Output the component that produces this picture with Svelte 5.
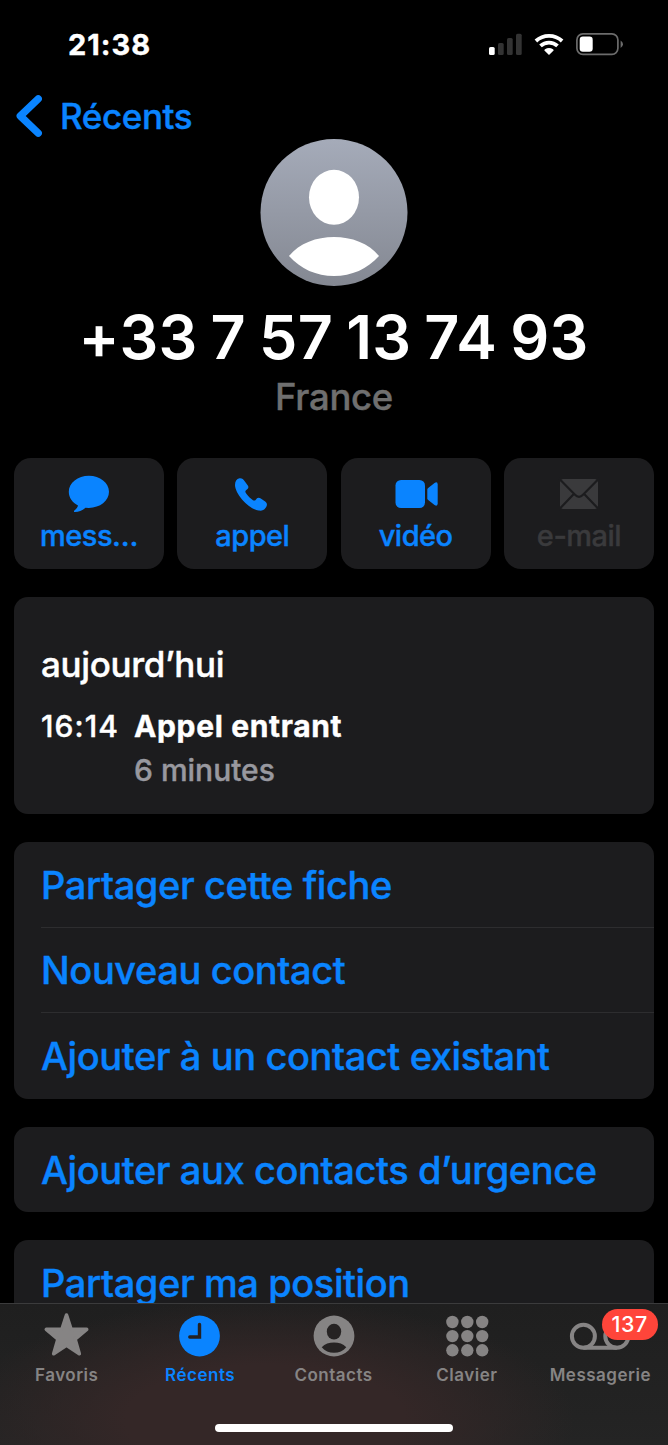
<script>
    const actions = [
        {icon: "message", label: "mess…"},
        {icon: "phone", label: "appel"},
        {icon: "video", label: "vidéo"},
        {icon: "mail", label: "e-mail", disabled: true},
    ];

    const groups = [
        ["Partager cette fiche", "Nouveau contact", "Ajouter à un contact existant"],
        ["Ajouter aux contacts d’urgence"],
        ["Partager ma position"],
    ];

    const tabs = [
        {icon: "star", label: "Favoris"},
        {icon: "clock", label: "Récents"},
        {icon: "person", label: "Contacts"},
        {icon: "keypad", label: "Clavier"},
        {icon: "voicemail", label: "Messagerie", badge: 137},
    ];

    let current = $state("Récents");
</script>

<div class="screen">
    <header class="status">
        <span class="clock">21:38</span>
        <svg width="136" height="26" viewBox="488 31 136 26">
            <rect x="489" y="47" width="5.7" height="8" rx="1.6" fill="#fff" />
            <g fill="#333">
                <rect x="498" y="43" width="5.7" height="12" rx="1.6" />
                <rect x="507" y="38" width="5.7" height="17" rx="1.6" />
                <rect x="516" y="33.7" width="5.7" height="21.3" rx="1.6" />
            </g>
            <g fill="none" stroke="#fff">
                <path d="M535.9 41A19.2 19.2 0 0 1 562.1 41" stroke-width="3.8" />
                <path d="M540.5 45.9A12.5 12.5 0 0 1 557.5 45.9" stroke-width="3.8" />
            </g>
            <path d="M549 55L544.4 50.6Q544 49.8 545 49.2A7.3 7.3 0 0 1 553 49.2Q554 49.8 553.6 50.6Z" fill="#fff" />
            <rect x="576.9" y="33.9" width="41" height="20.4" rx="6" fill="none" stroke="#6c6c6c" stroke-width="1.7" />
            <rect x="579.7" y="36.6" width="13" height="15.2" rx="3.2" fill="#fff" />
            <path d="M620.6 40.5Q623 42 623 44.2T620.6 48Z" fill="#6c6c6c" />
        </svg>
    </header>

    <nav class="back">
        <svg width="30" height="46" viewBox="0 0 30 46">
            <path d="M24.2 5.8L6.3 23L24.2 40.2" fill="none" stroke="#0a84ff" stroke-width="7.4" stroke-linecap="round" stroke-linejoin="round" />
        </svg>
        <span>Récents</span>
    </nav>

    <main>
        <section class="contact">
            <svg width="148" height="147" viewBox="0 0 148 147">
                <defs>
                    <linearGradient id="avatar" x1="0" y1="0" x2="0" y2="1">
                        <stop offset="0" stop-color="#a5abb9" />
                        <stop offset="1" stop-color="#848892" />
                    </linearGradient>
                </defs>
                <circle cx="74" cy="73.5" r="73.5" fill="url(#avatar)" />
                <ellipse cx="74" cy="58.3" rx="25" ry="27.5" fill="#fff" />
                <path d="M29 117C39.5 104 56.5 98 74 98S108.5 104 119 117C107.5 130 91.5 137 74 137S40.5 130 29 117Z" fill="#fff" />
            </svg>
            <h1>+33 7 57 13 74 93</h1>
            <p>France</p>
        </section>

        <section class="actions">
            {#each actions as action}
                <button class="action" disabled={action.disabled}>
                    <svg width="48" height="40" viewBox="0 0 48 40" fill="currentColor">
                        {#if action.icon === "message"}
                            <path d="M23.9 1.7C35 1.7 44 8.7 44 17.8S35 33.9 23.9 33.9L20.5 33.8C17.5 36.3 13.5 38 10 38C8.7 38 8.7 37.2 9.6 36.3C11.2 34.8 12.6 33.5 13 31.4C7.4 28.6 3.8 23.8 3.8 17.8C3.8 8.7 12.8 1.7 23.9 1.7Z" />
                        {:else if action.icon === "phone"}
                            <path d="M11.5 4.3C14 4 15.5 5.5 16.5 7L19.8 11.5C20.8 13 20.4 14 19.5 15L18 16.2C17 17.2 17.2 18 18 19.2C20 22 22.5 24.5 25 26.2C26.2 27 27 26.6 28 25.4L29 24.3C30 23.3 31.5 23.5 32.8 24.5L37.2 27.6C39.2 29 39.4 31 38.2 33C36.5 36 34 37.2 30.5 36.6C25 35.5 18.5 31 14 25.5C10 20.5 7 15 7 11C7 7.5 8.5 4.8 11.5 4.3Z" />
                        {:else if action.icon === "video"}
                            <rect x="3.5" y="6" width="29.5" height="28" rx="5.5" />
                            <path d="M35.3 15.8Q35.3 14.8 36.2 14L42.5 8.9Q45.7 7.3 45.7 10.5V29.5Q45.7 32.7 42.5 31.1L36.2 26Q35.3 25.2 35.3 24.2Z" />
                        {:else}
                            <rect x="5" y="5" width="38" height="30" rx="3.5" />
                            <path d="M4 4.5L20 20.8Q24 25 28 20.8L44 4.5M4 35.5L18.8 20M44 35.5L29.2 20" fill="none" stroke="#1c1c1e" stroke-width="2.2" />
                        {/if}
                    </svg>
                    <span>{action.label}</span>
                </button>
            {/each}
        </section>

        <section class="card history">
            <h2>aujourd’hui</h2>
            <div class="call">
                <span class="time">16:14</span>
                <div>
                    <strong>Appel entrant</strong>
                    <small>6 minutes</small>
                </div>
            </div>
        </section>

        {#each groups as rows}
            <section class="card">
                {#each rows as row}
                    <button class="row">{row}</button>
                {/each}
            </section>
        {/each}
    </main>

    <footer>
        <div class="tabs">
            {#each tabs as tab}
                <button class="tab" class:active={tab.label === current} onclick={() => current = tab.label}>
                    <svg width="62" height="48" viewBox="-1 0 62 48" fill="currentColor">
                        {#if tab.icon === "star"}
                            <path d="M29.5 4L34.1 18.2L49.7 18.4L38.1 28.2L42.3 42.7L29.5 34.3L16.7 42.7L20.9 28.2L9.3 18.4L24.9 18.2Z" stroke="currentColor" stroke-width="3.6" stroke-linejoin="round" />
                        {:else if tab.icon === "clock"}
                            <circle cx="29.5" cy="25" r="20.4" />
                            <path d="M29.5 13.5V26H19.8" fill="none" stroke="#242121" stroke-width="3.4" stroke-linecap="round" />
                        {:else if tab.icon === "person"}
                            <circle cx="30" cy="25" r="20.4" />
                            <g fill="#262323">
                                <ellipse cx="30" cy="20.6" rx="7.2" ry="7.9" />
                                <path d="M17.7 36.3C21 33 25 31.6 30 31.6S39 33 42.3 36.3C39 40 35 41.8 30 41.8S21 40 17.7 36.3Z" />
                            </g>
                        {:else if tab.icon === "keypad"}
                            {#each [11, 25.1, 39.3] as y}
                                {#each [15.4, 30.3, 45.2] as x}
                                    <circle cx={x} cy={y} r="6.2" />
                                {/each}
                            {/each}
                        {:else}
                            <g fill="none" stroke="currentColor" stroke-width="4">
                                <circle cx="13.4" cy="25.3" r="11.5" />
                                <circle cx="46.8" cy="25.3" r="11.5" />
                                <path d="M13.4 36.8H46.8" />
                            </g>
                        {/if}
                    </svg>
                    <span>{tab.label}</span>
                    {#if tab.badge}
                        <b class="badge">{tab.badge}</b>
                    {/if}
                </button>
            {/each}
        </div>
        <div class="home"></div>
    </footer>
</div>

<style>
    :global(body) {
        background: #000;
    }

    .screen {
        display: flex;
        flex-direction: column;
        width: 668px;
        height: 1445px;
        overflow: hidden;
        background: #000;
        color: #fff;
        font-family: Inter, "Liberation Sans", sans-serif;
    }

    h1, h2, p {
        margin: 0;
        font-weight: 500;
    }

    button {
        border: 0;
        padding: 0;
        background: none;
        color: #0a84ff;
        font: inherit;
    }

    svg {
        display: block;
        flex: none;
    }

    /* a touch heavier than Inter's medium and bold cuts */
    .clock, .back, .contact p, .action, h2, .call, .row {
        -webkit-text-stroke: 0.4px currentColor;
    }

    .status {
        display: flex;
        align-items: center;
        justify-content: space-between;
        height: 88px;
        flex: none;
        padding: 0 44px 0 68px;
    }

    .clock {
        padding-top: 1px;
        font-size: 29px;
        font-weight: 700;
        line-height: 30px;
        letter-spacing: 1px;
    }

    .back {
        display: flex;
        align-items: center;
        gap: 16px;
        height: 51px;
        flex: none;
        padding: 5px 0 0 14px;
        box-sizing: border-box;
        color: #0a84ff;
        font-size: 35px;
        font-weight: 500;
        line-height: 44px;
        letter-spacing: -0.4px;
    }

    .back span {
        margin-top: -1px;
    }

    main {
        display: flex;
        flex-direction: column;
        flex: 1;
        min-height: 0;
        padding: 0 14px;
        overflow: hidden;
    }

    main > * {
        flex: none;
    }

    .contact {
        display: flex;
        flex-direction: column;
        align-items: center;
        height: 319px;
        white-space: nowrap;
    }

    h1 {
        margin: 11px 0 0 -1px;
        font-size: 61px;
        font-weight: 600;
        line-height: 80px;
        letter-spacing: 0.2px;
        word-spacing: -2.4px;
    }

    .contact p {
        color: #6f6f6f;
        font-size: 36.5px;
        line-height: 40px;
        letter-spacing: -0.3px;
    }

    .actions {
        display: grid;
        grid-template-columns: repeat(4, 1fr);
        gap: 13.4px;
    }

    .action {
        display: flex;
        flex-direction: column;
        align-items: center;
        height: 111px;
        padding-top: 16px;
        border-radius: 17px;
        background: #1c1c1e;
        font-size: 29px;
        font-weight: 500;
        line-height: 43px;
        letter-spacing: -0.5px;
    }

    .action:disabled {
        color: #3a3a3c;
    }

    .card {
        margin-top: 28px;
        border-radius: 14px;
        background: #1c1c1e;
        overflow: hidden;
    }

    .history {
        box-sizing: border-box;
        height: 217px;
        padding: 45px 27px 0;
    }

    h2 {
        font-size: 35px;
        line-height: 44px;
        letter-spacing: -0.35px;
    }

    .call {
        display: flex;
        gap: 15px;
        margin-top: 18px;
        line-height: 44px;
    }

    .time {
        width: 78px;
        font-size: 30px;
        font-weight: 500;
        letter-spacing: 1.1px;
    }

    strong, small {
        display: block;
        font-size: 30px;
    }

    strong {
        letter-spacing: 0.65px;
    }

    small {
        color: #98989f;
        font-weight: 500;
    }

    .row {
        display: block;
        width: 612px;
        height: 85.5px;
        margin-left: 27px;
        padding-top: 1px;
        text-align: left;
        font-size: 38px;
        font-weight: 500;
        letter-spacing: -0.4px;
        white-space: nowrap;
    }

    .row:not(:last-child) {
        width: 613px;
        border-bottom: 1px solid #2d2d2f;
    }

    footer {
        display: flex;
        flex-direction: column;
        align-items: center;
        box-sizing: border-box;
        height: 142px;
        flex: none;
        border-top: 1px solid #3b3b3c;
        background:
            radial-gradient(ellipse 310px 120px at 265px 115px, #342727 0, #342727 45%, transparent),
            linear-gradient(#1f1f1f, #242424);
    }

    .tabs {
        display: flex;
        width: 667px;
        height: 120px;
        margin-left: -1px;
    }

    .tab {
        position: relative;
        display: flex;
        flex: 1;
        flex-direction: column;
        align-items: center;
        padding-top: 7px;
        color: #868484;
        font-size: 17px;
        font-weight: 600;
        line-height: 32px;
        letter-spacing: 0.5px;
    }

    .active {
        color: #0a84ff;
    }

    /* unread counter, hangs over the voicemail icon */
    .badge {
        position: absolute;
        top: 5px;
        left: 68px;
        width: 56px;
        height: 31px;
        border-radius: 16px;
        background: #ff453a;
        color: #fff;
        font-size: 21.5px;
        font-weight: 500;
        line-height: 31px;
        text-align: center;
    }

    .home {
        width: 238px;
        height: 8px;
        border-radius: 4px;
        background: #fff;
    }
</style>
